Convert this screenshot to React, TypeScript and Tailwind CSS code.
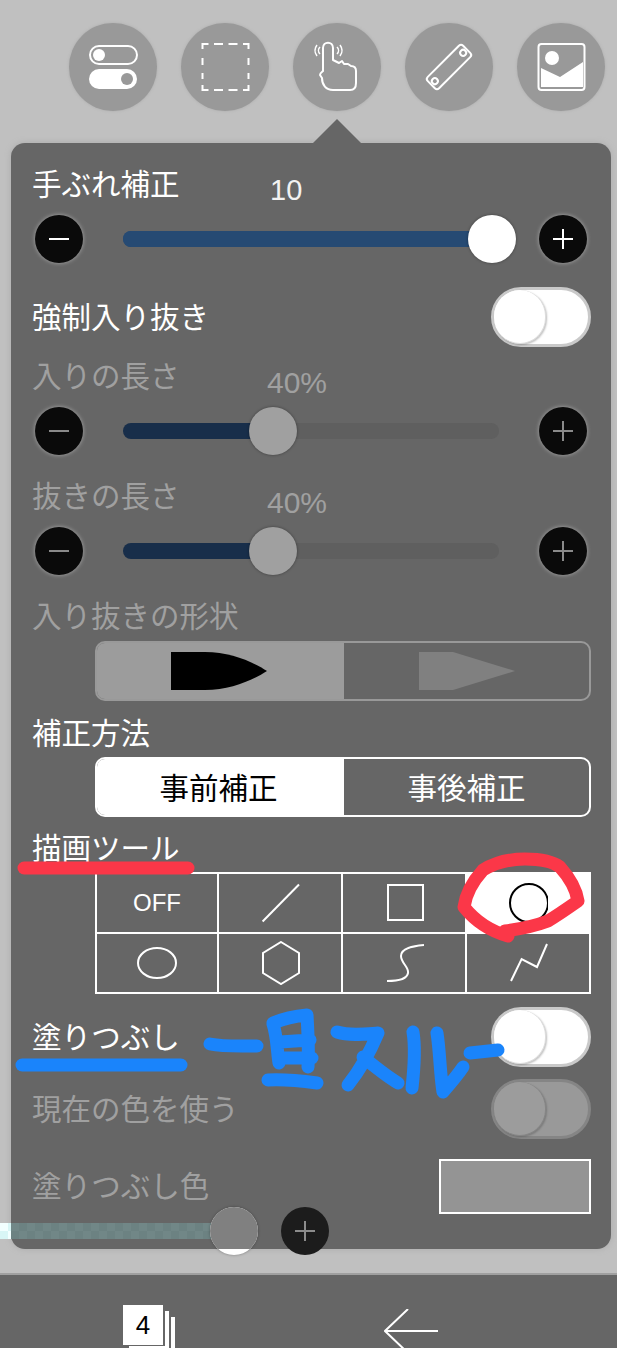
import React from "react";

const FONT = "[font-family:'Noto_Sans_CJK_JP','Noto_Sans',sans-serif]";
const NUM = "[font-family:'Liberation_Sans',Arial,sans-serif]";

function ToolButton({ children }: { children: React.ReactNode }) {
    return (
        <div className="w-[88px] h-[88px] rounded-full bg-[#999999] shadow-[0_0_3px_#aaaaaa]">
            <svg viewBox="0 0 88 88" className="w-full h-full" fill="none" stroke="white" strokeWidth="2">
                {children}
            </svg>
        </div>
    );
}

function Label({ text, dim, lift }: { text: string; dim?: boolean; lift?: boolean }) {
    return (
        <span className={`block text-[29.5px] leading-[36px] whitespace-nowrap ${lift ? "pb-[5px]" : ""} ${dim ? "text-[#a0a0a0]" : "text-white"}`}>
            {text}
        </span>
    );
}

function RoundButton({ kind, dim }: { kind: "minus" | "plus"; dim?: boolean }) {
    const color = dim ? "#8a8a8a" : "white";
    return (
        <div className="w-12 h-12 rounded-full bg-[#0a0a0a] shadow-[0_0_4px_#aaaaaa] shrink-0">
            <svg viewBox="0 0 48 48" className="w-full h-full" stroke={color} strokeWidth="2">
                <line x1="14" y1="24" x2="34" y2="24" />
                {kind === "plus" && <line x1="24" y1="14" x2="24" y2="34" />}
            </svg>
        </div>
    );
}

function Slider({ pct, dim, className }: { pct: number; dim?: boolean; className: string }) {
    const center = 4 + pct * 365;
    return (
        <div className={`flex items-center gap-10 pl-[3px] ${className}`}>
            <RoundButton kind="minus" dim={dim} />
            <div className={`relative w-[376px] h-4 rounded-full ${dim ? "bg-[#5f5f5f]" : "bg-[#264a73]"}`}>
                <div className={`h-full rounded-l-full ${dim ? "bg-[#182e4a]" : "bg-[#264a73]"}`} style={{ width: center }} />
                <div
                    className={`absolute top-[-16px] w-12 h-12 rounded-full shadow-[0_0_3px_rgba(0,0,0,0.4)] ${dim ? "bg-[#a0a0a0]" : "bg-white"}`}
                    style={{ left: center - 24 }}
                />
            </div>
            <RoundButton kind="plus" dim={dim} />
        </div>
    );
}

function Toggle({ dim }: { dim?: boolean }) {
    return (
        <div className={`flex w-[100px] h-[60px] rounded-full border-[3px] ${dim ? "bg-[#999999] border-[#858585]" : "bg-white border-[#c9c9c9]"}`}>
            <div
                className={`w-[52px] h-[54px] rounded-full border-r border-b ${
                    dim ? "bg-[#9c9c9c] border-[#858585] shadow-[1px_1px_2px_rgba(0,0,0,0.2)]" : "bg-white border-[#dddddd] shadow-[1px_1px_2px_rgba(0,0,0,0.25)]"
                }`}
            />
        </div>
    );
}

function ToggleRow({ text, dim, className }: { text: string; dim?: boolean; className: string }) {
    return (
        <div className={`flex items-center justify-between h-[60px] ${className}`}>
            <Label text={text} dim={dim} lift />
            <Toggle dim={dim} />
        </div>
    );
}

function Grid() {
    const cell = "flex items-center justify-center border-r-2 border-b-2 border-white";
    const icon = "w-10 h-11";
    return (
        <div className="ml-[63px] mt-1 w-[496px] h-[122px] grid grid-cols-[122px_124px_124px_124px] grid-rows-2 border-l-2 border-t-2 border-white">
            <div className={`${cell} text-white text-[24px] ${NUM}`}>OFF</div>
            <div className={cell}>
                <svg viewBox="0 0 40 44" className={icon} stroke="white" strokeWidth="2" fill="none">
                    <line x1="2.6" y1="40.5" x2="39" y2="3.5" />
                </svg>
            </div>
            <div className={cell}>
                <svg viewBox="0 0 40 44" className={icon} stroke="white" strokeWidth="2" fill="none">
                    <rect x="4" y="4" width="35" height="35" />
                </svg>
            </div>
            <div className={`${cell} bg-white`}>
                <svg viewBox="0 0 40 44" className={icon} stroke="black" strokeWidth="2" fill="none">
                    <circle cx="21" cy="22" r="19" />
                </svg>
            </div>
            <div className={cell}>
                <svg viewBox="0 0 40 44" className={icon} stroke="white" strokeWidth="2" fill="none">
                    <ellipse cx="20" cy="22" rx="19" ry="15" />
                </svg>
            </div>
            <div className={cell}>
                <svg viewBox="0 0 40 44" className={icon} stroke="white" strokeWidth="2" fill="none">
                    <polygon points="21,1 39,12 39,32 21,43 3,32 3,12" />
                </svg>
            </div>
            <div className={cell}>
                <svg viewBox="0 0 40 44" className={icon} stroke="white" strokeWidth="2" fill="none">
                    <path d="M40 4C29 5 17 7 17 15C17 22 25 26 24 32C23 38 13 40 3 40" />
                </svg>
            </div>
            <div className={cell}>
                <svg viewBox="0 0 40 44" className={icon} stroke="white" strokeWidth="2" fill="none">
                    <polyline points="3,40 13.6,18 29,26 39,3" />
                </svg>
            </div>
        </div>
    );
}

export default function App() {
    return (
        <div className={`relative w-[617px] h-[1348px] overflow-hidden flex flex-col bg-[#c0c0c0] ${FONT}`}>
            {/* top tool buttons */}
            <div className="flex gap-6 pl-[69px] pt-[23px]">
                <ToolButton>
                    <rect x="21" y="23" width="47" height="18" rx="9" />
                    <circle cx="30" cy="32" r="6" fill="white" stroke="none" />
                    <rect x="20" y="46" width="48" height="20" rx="10" fill="white" stroke="none" />
                    <circle cx="58" cy="56" r="6" fill="#999999" stroke="none" />
                </ToolButton>
                <ToolButton>
                    <path d="M21.5 21H68" strokeDasharray="6 5.5 9 5.5 9 5.5 6" />
                    <path d="M21.5 67H68" strokeDasharray="6 5.5 9 5.5 9 5.5 6" />
                    <path d="M21.5 20V68" strokeDasharray="6 9 7 8 6 6 6" />
                    <path d="M67.5 20V68" strokeDasharray="6 9 7 8 6 6 6" />
                </ToolButton>
                <ToolButton>
                    <path d="M30 48V25C30 18 40 18 40 25V37L46 40L49 38L51 41L55 41L58 43C62 43 63 46 63 48V60C63 65 61 67 57 67H40C33 67 29 62 29 55L27 52C27 50 29 49 30 48Z" strokeLinejoin="round" />
                    <path d="M24 22C21 26 21 29 24 33M27 24C25 26 25 29 27 31M44 24C46 26 46 29 44 31M47 22C50 26 50 29 47 33" strokeWidth="1.5" />
                </ToolButton>
                <ToolButton>
                    <g transform="rotate(-45 44 44)">
                        <rect x="19" y="36" width="50" height="16" rx="3" />
                        <circle cx="24" cy="44" r="3" />
                        <circle cx="64" cy="44" r="3" />
                    </g>
                </ToolButton>
                <ToolButton>
                    <rect x="21.5" y="21" width="46" height="46" rx="3" />
                    <circle cx="35" cy="35" r="7" fill="white" stroke="none" />
                    <polygon points="24,45 43,54 66,39 66,64 24,64" fill="white" stroke="none" />
                </ToolButton>
            </div>

            {/* settings panel */}
            <div className="relative mt-8 ml-[11px] w-[600px] h-[1106px] shrink-0 rounded-[14px] bg-[#666666] pt-[21px] pl-[21px] pr-5 shadow-[0_0_6px_#aaaaaa]">
                <div className="absolute left-[302px] top-[-24px] w-12 h-6 bg-[#666666] [clip-path:polygon(50%_0,100%_100%,0_100%)]" />

                <div className="flex h-10">
                    <div className="w-[238px]"><Label text="手ぶれ補正" /></div>
                    <span className={`pt-[6px] text-[29px] leading-[40px] text-[#f2f2f2] ${NUM}`}>10</span>
                </div>
                <Slider pct={1} className="mt-[11px]" />

                <ToggleRow text="強制入り抜き" className="mt-6" />

                <div className="flex h-10 mt-[9px]">
                    <div className="w-[235px]"><Label text="入りの長さ" dim /></div>
                    <span className={`pt-[7px] text-[30px] leading-[40px] text-[#a0a0a0] ${NUM}`}>40%</span>
                </div>
                <Slider pct={0.4} dim className="mt-[11px]" />

                <div className="flex h-10 mt-[21px]">
                    <div className="w-[235px]"><Label text="抜きの長さ" dim /></div>
                    <span className={`pt-[7px] text-[30px] leading-[40px] text-[#a0a0a0] ${NUM}`}>40%</span>
                </div>
                <Slider pct={0.4} dim className="mt-[11px]" />

                <div className="h-10 mt-[21px]"><Label text="入り抜きの形状" dim /></div>
                <div className="ml-[63px] mt-[5px] flex w-[496px] h-[60px] rounded-[10px] border-2 border-[#999999] overflow-hidden">
                    <div className="w-[247px] flex items-center justify-center pr-1 bg-[#9c9c9c]">
                        <svg viewBox="0 0 96 38" className="w-24 h-[38px]">
                            <path d="M0 0H34C60 0 82 10 96 19C82 28 60 38 34 38H0Z" fill="black" />
                        </svg>
                    </div>
                    <div className="flex-1 flex items-center justify-center">
                        <svg viewBox="0 0 96 38" className="w-24 h-[38px]">
                            <polygon points="0,0 34,0 96,19 34,38 0,38" fill="#808080" />
                        </svg>
                    </div>
                </div>

                <div className="h-10 mt-3"><Label text="補正方法" /></div>
                <div className="ml-[63px] mt-1 flex w-[496px] h-[60px] rounded-[10px] border-2 border-white overflow-hidden text-[29.5px] leading-[36px]">
                    <div className="w-[247px] flex items-center justify-center pr-1 pb-[2px] bg-white text-black">事前補正</div>
                    <div className="flex-1 flex items-center justify-center pb-[2px] text-white">事後補正</div>
                </div>

                <div className="h-10 mt-[11px]"><Label text="描画ツール" /></div>
                <Grid />

                <ToggleRow text="塗りつぶし" className="mt-[13px]" />
                <ToggleRow text="現在の色を使う" dim className="mt-3" />

                <div className="flex items-center justify-between h-[55px] mt-5">
                    <Label text="塗りつぶし色" dim lift />
                    <div className="w-[152px] h-[55px] bg-[#949494] border-2 border-white" />
                </div>
            </div>

            {/* bottom bar */}
            <div className="mt-6 flex-1 flex gap-[209px] pl-[123px] pt-[30px] border-t-2 border-[#a0a0a0] bg-[#666666]">
                <div className="relative w-[52px] h-12 shrink-0">
                    <div className="absolute left-[42px] top-[6px] w-1 h-11 bg-white" />
                    <div className="absolute left-12 top-3 w-1 h-10 bg-white" />
                    <div className="absolute left-[6px] top-[41px] w-9 h-1 bg-white" />
                    <div className={`relative w-10 h-10 flex items-center justify-center bg-white text-black text-[26px] ${NUM}`}>4</div>
                </div>
                <svg viewBox="0 0 54 48" className="w-[54px] h-12 shrink-0 mt-[4px]" fill="none" stroke="white" strokeWidth="2">
                    <path d="M24 0L1 22L24 44M1 22H54" />
                </svg>
            </div>

            {/* slider peeking out of the panel edge */}
            <div className="absolute left-0 top-[1223px] w-[11px] h-4 bg-[repeating-conic-gradient(#d8f6f6_0_25%,#f2ffff_0_50%)] bg-size-[16px_16px]" />
            <div className="absolute left-[11px] top-[1223px] w-[204px] h-4 bg-[repeating-conic-gradient(#6c8282_0_25%,#718787_0_50%)] bg-size-[16px_16px]" />
            <div className="absolute left-[210px] top-[1207px] w-12 h-12 rounded-full overflow-hidden bg-white shadow-[0_0_3px_rgba(0,0,0,0.35)]">
                <div className="h-[42px] bg-[#808080]" />
            </div>
            <div className="absolute left-[281px] top-[1207px] w-12 h-12 rounded-full overflow-hidden bg-[#1c1c1c]">
                <svg viewBox="0 0 48 48" className="w-full h-full" stroke="#8c8c8c" strokeWidth="2">
                    <line x1="14" y1="24" x2="34" y2="24" />
                    <line x1="24" y1="14" x2="24" y2="34" />
                </svg>
            </div>

            {/* hand-drawn marks on top of the screenshot */}
            <svg viewBox="0 0 617 1348" className="absolute inset-0 w-full h-full pointer-events-none" fill="none" strokeLinecap="round" strokeLinejoin="round">
                <g stroke="#fb3748" strokeWidth="13">
                    <line x1="24" y1="868" x2="188" y2="868" />
                    <path d="M508 936C490 931 476 922 464 907C466 892 474 880 483 870C496 862 510 859 525 859C540 859 552 861 560 867C569 877 576 888 578 901C568 908 558 915 548 921C535 926 520 929 505 931L508 936" />
                </g>
                <g stroke="#1a84fb" strokeWidth="13">
                    <line x1="22" y1="1065" x2="181" y2="1065" />
                    <path d="M210 1044C225 1047 242 1046 257 1046" />
                    <path d="M273 1024C277 1036 277 1050 279 1063M273 1023C285 1018 296 1016 307 1015C308 1032 309 1050 308 1067M280 1042L310 1040M280 1058L312 1058M268 1080C285 1079 302 1081 317 1083" />
                    <path d="M337 1032C350 1036 365 1034 378 1033C370 1052 360 1070 348 1085M363 1057C374 1066 386 1076 398 1083" />
                    <path d="M413 1032C416 1050 414 1070 412 1088" />
                    <path d="M437 1033C440 1052 440 1074 443 1092C450 1084 457 1076 463 1067" />
                    <path d="M470 1053C479 1052 489 1051 498 1050" />
                </g>
            </svg>
        </div>
    );
}
